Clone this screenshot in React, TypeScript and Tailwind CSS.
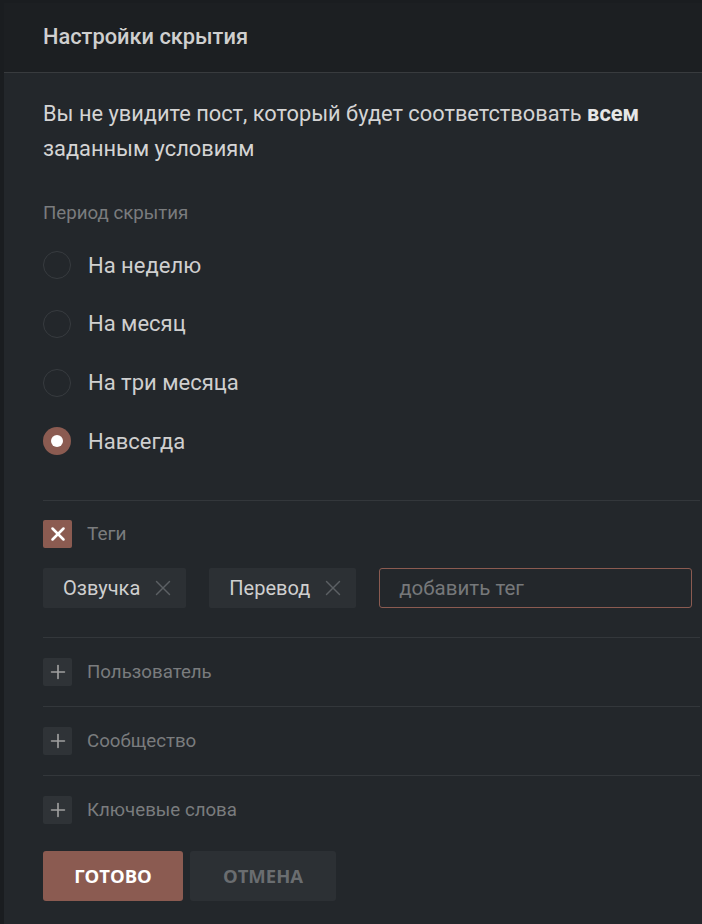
import { X, Plus } from "lucide-react";

const periods = [
  { label: "На неделю", checked: false },
  { label: "На месяц", checked: false },
  { label: "На три месяца", checked: false },
  { label: "Навсегда", checked: true },
];

const tags = ["Озвучка", "Перевод"];

const extras = ["Пользователь", "Сообщество", "Ключевые слова"];

function Radio({ label, checked }: { label: string; checked: boolean }) {
  return (
    <div className="flex h-[58.67px] items-center gap-[17px]">
      {checked ? (
        <div className="flex h-[28px] w-[28px] items-center justify-center rounded-full bg-[#8b5b51]">
          <div className="h-[12px] w-[12px] rounded-full bg-white" />
        </div>
      ) : (
        <div className="h-[28px] w-[28px] rounded-full border-[1.5px] border-[#373b3f]" />
      )}
      <span className="text-[22px] text-[#cfcfcf]">{label}</span>
    </div>
  );
}

export default function App() {
  return (
    <div
      className="min-h-[924px] bg-[#1a1d20] pl-[4px] pt-[3px]"
      style={{ fontFamily: "Roboto, 'Noto Sans', sans-serif" }}
    >
      <div className="min-h-[921px] bg-[#23272b]">
        {/* Header */}
        <div className="flex h-[70px] items-center border-b border-[#383b3e] bg-[#1c1f22] pl-[39px]">
          <h2 className="text-[21.8px] font-medium text-[#cfcfcf]">Настройки скрытия</h2>
        </div>

        <div className="pl-[39px] pr-[2px] pt-[23px]">
          <p className="text-[21.8px] leading-[35px] text-[#d4d4d4]">
            Вы не увидите пост, который будет соответствовать <b className="font-bold text-[#e6e6e6]">всем</b>
            <br />
            заданным условиям
          </p>

          <div className="mt-[35px] text-[18.7px] leading-[24px] text-[#7a7c7e]">Период скрытия</div>

          {/* Period radios */}
          <div className="mt-[11px] mb-[29px] flex flex-col">
            {periods.map((p) => (
              <Radio key={p.label} label={p.label} checked={p.checked} />
            ))}
          </div>

          {/* Tags */}
          <div className="border-t border-[#33373b] pt-[19px] pb-[29px]">
            <div className="flex items-center gap-[15px]">
              <div className="flex h-[28px] w-[29px] items-center justify-center rounded-[2px] bg-[#8b5b51]">
                <X className="h-[22px] w-[22px] text-white" strokeWidth={2.8} />
              </div>
              <span className="text-[19px] text-[#7a7c7e]">Теги</span>
            </div>
            <div className="mt-[20px] flex items-center gap-[23px]">
              {tags.map((t) => (
                <div
                  key={t}
                  className="flex h-[40px] items-center gap-[9.5px] rounded-[2px] bg-[#2c3034] pl-[20px] pr-[10.5px]"
                >
                  <span className="text-[20px] text-[#cfcfcf]">{t}</span>
                  <X className="h-[26px] w-[26px] text-[#5c6064]" strokeWidth={1.3} />
                </div>
              ))}
              <div className="flex h-[40px] w-[313px] items-center rounded-[3px] border border-[#8b5b51] pl-[19px]">
                <span className="text-[20.5px] text-[#76787a]">добавить тег</span>
              </div>
            </div>
          </div>

          {/* Extra conditions */}
          {extras.map((e) => (
            <div key={e} className="flex items-center gap-[15px] border-t border-[#33373b] py-[20px]">
              <div className="flex h-[28px] w-[29px] items-center justify-center rounded-[2px] bg-[#2f3337]">
                <Plus className="h-[22px] w-[22px] text-[#a0a0a0]" strokeWidth={1.8} />
              </div>
              <span className="text-[18.7px] text-[#7a7c7e]">{e}</span>
            </div>
          ))}

          {/* Actions */}
          <div className="mt-[7px] flex gap-[7px]" style={{ fontFamily: "'Open Sans', sans-serif" }}>
            <button className="h-[50px] w-[140px] rounded-[3px] bg-[#8b5b51] text-[18.5px] font-bold text-white">
              ГОТОВО
            </button>
            <button className="h-[50px] w-[146px] rounded-[3px] bg-[#2c3034] text-[18.5px] font-bold text-[#6a6d70]">
              ОТМЕНА
            </button>
          </div>
        </div>
      </div>
    </div>
  );
}
